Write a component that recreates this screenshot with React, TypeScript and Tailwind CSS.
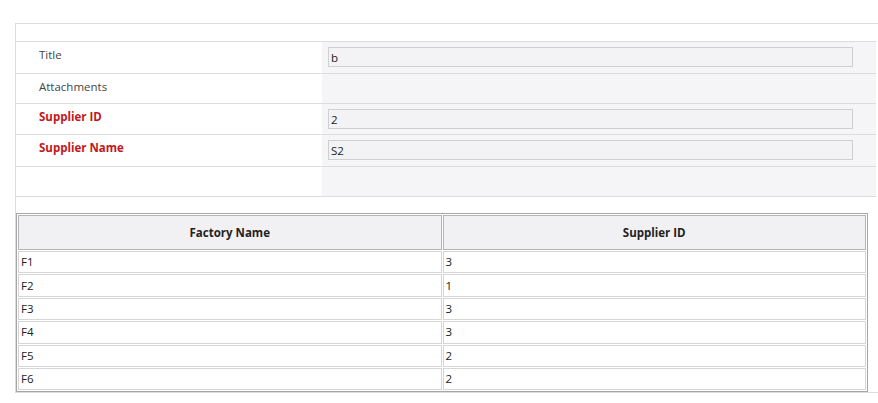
import React from "react";

const rows = [
  ["F1", "3"],
  ["F2", "1"],
  ["F3", "3"],
  ["F4", "3"],
  ["F5", "2"],
  ["F6", "2"],
];

function FormRow({ label, value, red, h }: { label?: string; value?: string; red?: boolean; h: string }) {
  return (
    <div className={`flex border-t border-[#dcdcdc] ${h}`}>
      <div
        className={`w-[306px] shrink-0 pl-[23px] pt-[4px] ${
          red ? "font-bold text-[#c4161c]" : "text-[#444444]"
        }`}
      >
        {label}
      </div>
      <div className="flex-1 bg-[#f5f5f7] pl-[6px] pt-[5px]">
        {value !== undefined && (
          <div className="w-[525px] h-[20px] border border-[#cfcfd1] bg-[#f3f3f5] pl-[2px] leading-[19px] text-[#222]">
            {value}
          </div>
        )}
      </div>
    </div>
  );
}

export default function App() {
  return (
    <div
      className="bg-white w-[878px] h-[403px] overflow-hidden pt-[23px] text-[11.5px]"
      style={{ fontFamily: '"Open Sans", "Liberation Sans", sans-serif' }}
    >
      <div className="ml-[15px] w-[880px] border-l border-t border-b border-[#dcdcdc]">
        <div className="w-[860px]">
          <div className="h-[17px]" />
          <FormRow label="Title" value="b" h="h-[32px]" />
          <FormRow label="Attachments" h="h-[30px]" />
          <FormRow label="Supplier ID" value="2" red h="h-[31px]" />
          <FormRow label="Supplier Name" value="S2" red h="h-[32px]" />
          <FormRow h="h-[30px]" />
          <div className="border-t border-[#dcdcdc]" />
        </div>
        <div className="h-[16px]" />
        <table className="w-[852px] border-separate border-spacing-[1px] border border-[#a6a6a6] table-fixed text-[#222]">
          <thead>
            <tr>
              <th className="h-[35px] w-1/2 border border-[#b4b4b4] bg-[#f1f1f3] font-bold text-center">Factory Name</th>
              <th className="h-[35px] w-1/2 border border-[#b4b4b4] bg-[#f1f1f3] font-bold text-center">Supplier ID</th>
            </tr>
          </thead>
          <tbody>
            {rows.map(([a, b]) => (
              <tr key={a}>
                <td className="h-[22.4px] border border-[#d6d6d6] pl-[2px] py-0 leading-[20px] text-left">{a}</td>
                <td className="h-[22.4px] border border-[#d6d6d6] pl-[2px] py-0 leading-[20px] text-left">{b}</td>
              </tr>
            ))}
          </tbody>
        </table>
      </div>
    </div>
  );
}
